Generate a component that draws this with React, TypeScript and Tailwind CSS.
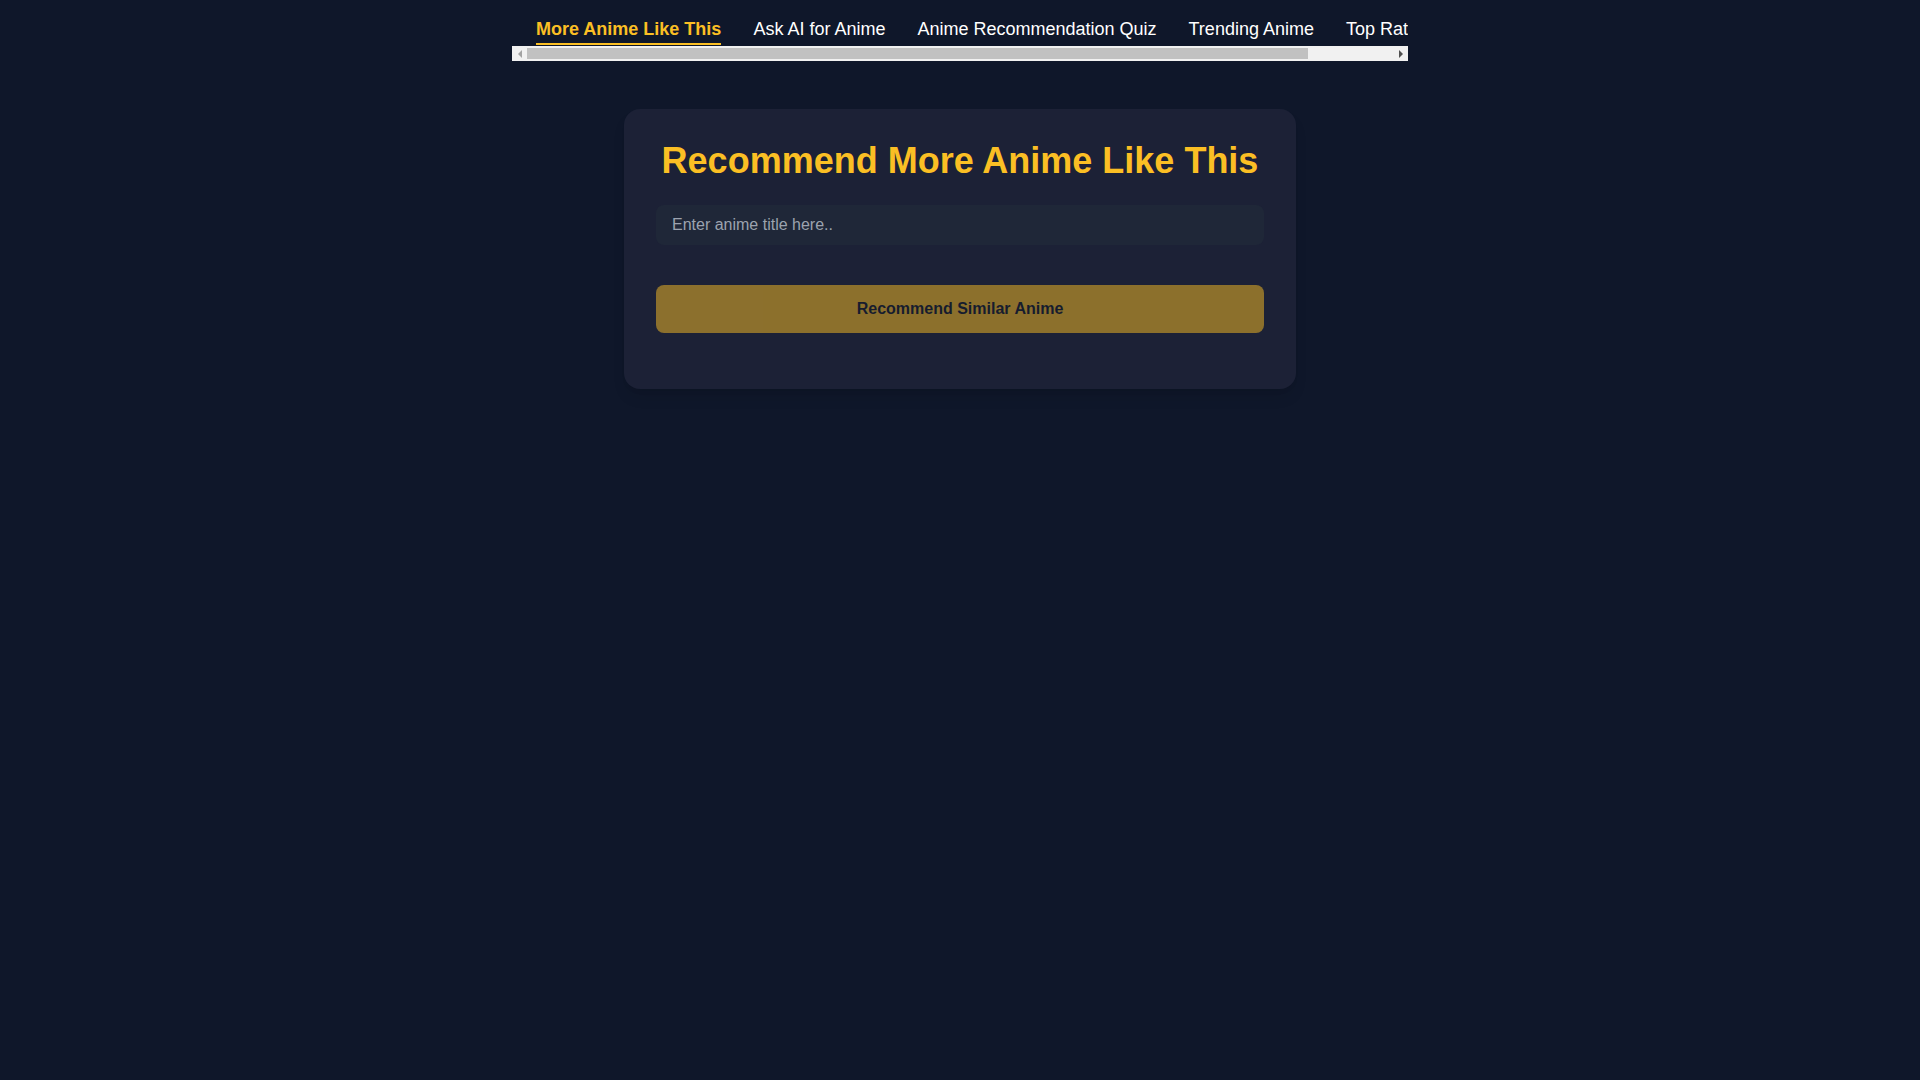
import React from "react";

const tabs = [
  "More Anime Like This",
  "Ask AI for Anime",
  "Anime Recommendation Quiz",
  "Trending Anime",
  "Top Rated Anime",
];

function FakeScrollbar() {
  return (
    <div className="flex h-[15px] w-full bg-[#f1f1f1]">
      <div className="flex w-[15px] shrink-0 items-center justify-center">
        <div className="h-0 w-0 border-y-[4px] border-r-[4px] border-y-transparent border-r-[#a3a3a3]" />
      </div>
      <div className="flex-1 py-[2px]">
        <div className="h-full w-[90.2%] bg-[#c1c1c1]" />
      </div>
      <div className="flex w-[15px] shrink-0 items-center justify-center">
        <div className="h-0 w-0 border-y-[4px] border-l-[4px] border-y-transparent border-l-[#505050]" />
      </div>
    </div>
  );
}

export default function App() {
  return (
    <div
      className="min-h-screen w-full bg-[#0f172a] text-white"
      style={{ fontFamily: '"Liberation Sans", Arial, sans-serif' }}
    >
      <nav className="mx-auto w-[896px]">
        <div className="overflow-hidden">
          <div className="flex gap-8 whitespace-nowrap px-6 pt-4 pb-px">
            {tabs.map((t, i) => (
              <span
                key={t}
                className={
                  i === 0
                    ? "shrink-0 border-b-2 border-[#fbbf24] text-lg leading-[27px] font-bold text-[#fbbf24]"
                    : "shrink-0 border-b-2 border-transparent text-lg leading-[27px] text-white"
                }
              >
                {t}
              </span>
            ))}
          </div>
        </div>
        <FakeScrollbar />
      </nav>

      <div className="mx-auto mt-12 w-[672px] rounded-2xl bg-[#1c2136] p-8 shadow-lg">
        <h1 className="mb-6 text-center text-4xl leading-10 font-bold text-[#fbbf24]">
          Recommend More Anime Like This
        </h1>
        <input
          type="text"
          placeholder="Enter anime title here.."
          className="block h-10 w-full rounded-lg bg-[#1f2738] px-4 text-base text-white placeholder-[#9ca3af] outline-none"
        />
        <button
          disabled
          className="mt-10 block h-12 w-full rounded-lg bg-[#fbbf24] text-base font-bold text-[#111827] opacity-50"
        >
          Recommend Similar Anime
        </button>
        <div className="h-6" />
      </div>
    </div>
  );
}
